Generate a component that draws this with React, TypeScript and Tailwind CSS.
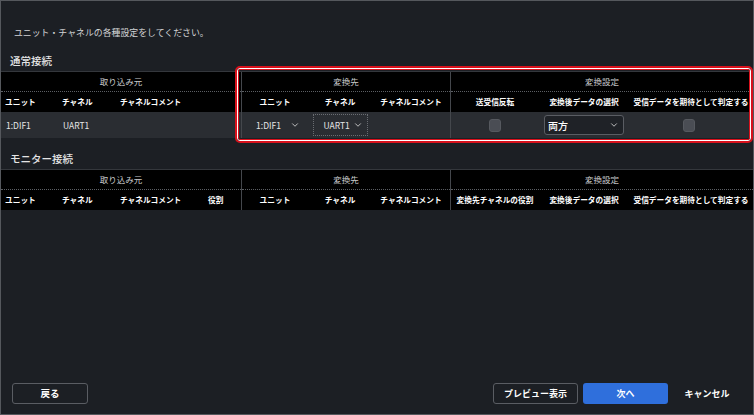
import React from 'react';
import { ChevronDown } from 'lucide-react';

const FONT = "font-['Noto_Sans_CJK_JP','Noto_Sans',sans-serif]";

type Col = { label: string; w: string };

const SRC_NORMAL: Col[] = [
  { label: 'ユニット', w: 'w-[57px]' },
  { label: 'チャネル', w: 'w-[58px]' },
  { label: 'チャネルコメント', w: 'flex-1' },
];

const SRC_MONITOR: Col[] = [
  { label: 'ユニット', w: 'w-[57px]' },
  { label: 'チャネル', w: 'w-[58px]' },
  { label: 'チャネルコメント', w: 'w-[88px]' },
  { label: '役割', w: 'flex-1' },
];

const DST: Col[] = [
  { label: 'ユニット', w: 'w-[66px]' },
  { label: 'チャネル', w: 'w-[64px]' },
  { label: 'チャネルコメント', w: 'flex-1' },
];

const CONV_NORMAL: Col[] = [
  { label: '送受信反転', w: 'w-[88px]' },
  { label: '変換後データの選択', w: 'w-[90px]' },
  { label: '受信データを期待として判定する', w: 'flex-1' },
];

const CONV_MONITOR: Col[] = [
  { label: '変換先チャネルの役割', w: 'w-[88px]' },
  { label: '変換後データの選択', w: 'w-[90px]' },
  { label: '受信データを期待として判定する', w: 'flex-1' },
];

function GroupHead({ title, cols, align }: { title: string; cols: Col[]; align: 'left' | 'center' }) {
  return (
    <>
      <div className="h-[20px] flex items-center justify-center bg-black border-b border-dotted border-[#5c5f64] text-[8.5px] text-[#c9cacc]">
        {title}
      </div>
      <div className="h-[20px] flex items-center bg-black">
        {cols.map((c) => (
          <div
            key={c.label}
            className={`${c.w} h-full flex items-center whitespace-nowrap text-[7.7px] font-bold text-white ${
              align === 'left' ? 'pl-[4px]' : 'justify-center'
            }`}
          >
            {c.label}
          </div>
        ))}
      </div>
    </>
  );
}

function Checkbox() {
  return <div className="w-[12px] h-[13px] rounded-[3px] bg-[#4a4d54] border border-[#56595f]" />;
}

function NormalTable() {
  return (
    <div className="flex border-t border-[#34373c]">
      <div className="w-[240px] flex flex-col">
        <GroupHead title="取り込み元" cols={SRC_NORMAL} align="left" />
        <div className="h-[26px] flex items-center bg-[#2a2d32] text-[8.5px] text-[#e6e6e6]">
          <div className="w-[57px] pl-[5px]">1:DIF1</div>
          <div className="w-[58px] pl-[5px]">UART1</div>
          <div className="flex-1" />
        </div>
      </div>
      <div className="w-[209px] flex flex-col border-l border-[#44474c]">
        <GroupHead title="変換先" cols={DST} align="center" />
        <div className="h-[26px] flex items-center bg-[#2a2d32] text-[8.5px] text-[#e6e6e6]">
          <div className="w-[66px] flex items-center justify-center gap-[9px] pl-[6px]">
            <span>1:DIF1</span>
            <ChevronDown size={10} strokeWidth={2} className="text-[#d8d8d8]" />
          </div>
          <div className="w-[64px] flex items-center justify-center">
            <div className="w-[55px] h-[22px] border border-dotted border-[#6a6d72] flex items-center justify-between pl-[10px] pr-[4px]">
              <span>UART1</span>
              <ChevronDown size={10} strokeWidth={2} className="text-[#d8d8d8]" />
            </div>
          </div>
          <div className="flex-1" />
        </div>
      </div>
      <div className="flex-1 flex flex-col border-l border-[#44474c]">
        <GroupHead title="変換設定" cols={CONV_NORMAL} align="center" />
        <div className="h-[26px] flex items-center bg-[#2a2d32]">
          <div className="w-[88px] flex justify-center">
            <Checkbox />
          </div>
          <div className="w-[90px] flex justify-center">
            <div className="w-[80px] h-[20px] rounded-[3px] border border-[#5a5d63] bg-[#1f2227] flex items-center justify-between pl-[3px] pr-[4px]">
              <span className="text-[10px] font-medium text-white">両方</span>
              <ChevronDown size={10} strokeWidth={2} className="text-[#d8d8d8]" />
            </div>
          </div>
          <div className="flex-1 flex justify-center pr-[4px]">
            <Checkbox />
          </div>
        </div>
      </div>
    </div>
  );
}

function MonitorTable() {
  return (
    <div className="flex border-t border-[#34373c]">
      <div className="w-[240px] flex flex-col">
        <GroupHead title="取り込み元" cols={SRC_MONITOR} align="left" />
      </div>
      <div className="w-[209px] flex flex-col border-l border-[#44474c]">
        <GroupHead title="変換先" cols={DST} align="center" />
      </div>
      <div className="flex-1 flex flex-col border-l border-[#44474c]">
        <GroupHead title="変換設定" cols={CONV_MONITOR} align="center" />
      </div>
    </div>
  );
}

export default function App(): React.ReactElement {
  return (
    <div className={`${FONT} relative w-full h-[415px] bg-[#1c1f24] border border-[#55585d] flex flex-col`}>
      <div className="pt-[26px] pl-[13px] text-[8.9px] leading-[12px] text-[#d2d3d5]">
        ユニット・チャネルの各種設定をしてください。
      </div>

      <div className="mt-[15px] mb-[3px] pl-[9px] text-[10.5px] leading-[14px] font-medium text-[#e4e4e4]">通常接続</div>
      <NormalTable />

      <div className="mt-[14px] mb-[3px] pl-[9px] text-[10.5px] leading-[14px] font-medium text-[#e4e4e4]">モニター接続</div>
      <MonitorTable />

      <div className="mt-auto mb-[10px] flex items-center justify-between">
        <button className="ml-[11px] w-[76px] h-[21px] rounded-[3px] border border-[#5a5d63] text-[9.5px] font-bold text-white">
          戻る
        </button>
        <div className="flex items-center gap-[5px] pr-[12px]">
          <button className="w-[85px] h-[21px] rounded-[3px] border border-[#5a5d63] text-[9px] font-bold text-white">
            プレビュー表示
          </button>
          <button className="w-[85px] h-[21px] rounded-[3px] bg-[#2f6fdc] text-[9px] font-bold text-white">
            次へ
          </button>
          <button className="w-[68px] h-[21px] text-[9px] font-bold text-white">キャンセル</button>
        </div>
      </div>

      {/* 赤枠の注記 */}
      <div className="absolute left-[234px] top-[65px] w-[518px] h-[77px] rounded-[5px] border-[2px] border-[#d8111c] pointer-events-none">
        <div className="w-full h-full rounded-[3px] border border-white">
          <div className="w-full h-full rounded-[2px] border border-[#d8111c]" />
        </div>
      </div>
    </div>
  );
}
